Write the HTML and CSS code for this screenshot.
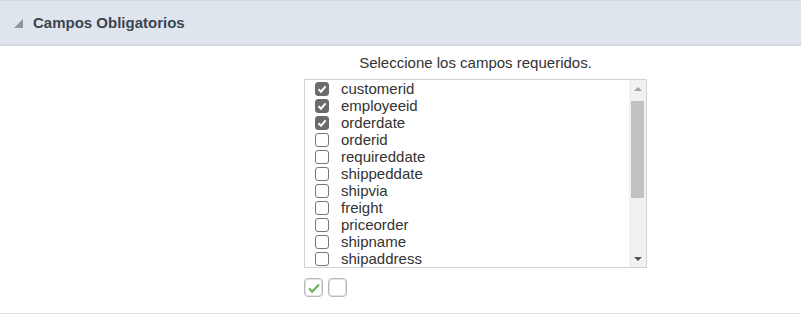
FILE: index.html
```html
<!DOCTYPE html>
<html>
<head>
<meta charset="utf-8">
<link rel="stylesheet" href="styles.css">
</head>
<body>
<div class="panel">
  <div class="panel-head">
    <svg class="toggle" width="9" height="9" viewBox="0 0 9 9"><polygon points="9,0 9,9 0,9" fill="#8c96a1"/></svg>
    <span class="title">Campos Obligatorios</span>
  </div>
  <div class="panel-body">
    <div class="field">
      <div class="caption">Seleccione los campos requeridos.</div>
      <div class="listbox">
        <div class="items">
          <div class="item"><span class="cb on"><svg width="12" height="12" viewBox="0 0 12 12"><path d="M2.5 6.3 L5 8.7 L9.6 3.3" fill="none" stroke="#fff" stroke-width="2"/></svg></span>customerid</div>
          <div class="item"><span class="cb on"><svg width="12" height="12" viewBox="0 0 12 12"><path d="M2.5 6.3 L5 8.7 L9.6 3.3" fill="none" stroke="#fff" stroke-width="2"/></svg></span>employeeid</div>
          <div class="item"><span class="cb on"><svg width="12" height="12" viewBox="0 0 12 12"><path d="M2.5 6.3 L5 8.7 L9.6 3.3" fill="none" stroke="#fff" stroke-width="2"/></svg></span>orderdate</div>
          <div class="item"><span class="cb"></span>orderid</div>
          <div class="item"><span class="cb"></span>requireddate</div>
          <div class="item"><span class="cb"></span>shippeddate</div>
          <div class="item"><span class="cb"></span>shipvia</div>
          <div class="item"><span class="cb"></span>freight</div>
          <div class="item"><span class="cb"></span>priceorder</div>
          <div class="item"><span class="cb"></span>shipname</div>
          <div class="item"><span class="cb"></span>shipaddress</div>
        </div>
        <div class="scrollbar">
          <div class="arrow up"></div>
          <div class="track"><div class="thumb"></div></div>
          <div class="arrow down"></div>
        </div>
      </div>
      <div class="actions">
        <span class="btn"><svg width="14" height="12" viewBox="0 0 14 12"><path d="M2 6.5 L5.2 9.6 L12 2.4" fill="none" stroke="#6cb35a" stroke-width="2.2"/></svg></span>
        <span class="btn"></span>
      </div>
    </div>
  </div>
</div>
</body>
</html>
```

FILE: styles.css
```css
html, body {
  margin: 0;
  padding: 0;
  background: #fff;
}
body {
  font-family: "Liberation Sans", Arial, sans-serif;
  color: #333;
  font-size: 15px;
}
.panel {
  width: 801px;
}
.panel-head {
  height: 43px;
  background: #dfe5ec;
  border-top: 1px solid #d0d9e1;
  border-bottom: 2px solid #d2dbe3;
  display: flex;
  align-items: center;
}
.toggle {
  margin-left: 14px;
  margin-top: 2px;
}
.title {
  margin-left: 10px;
  font-weight: bold;
  font-size: 15px;
  color: #3b4450;
}
.panel-body {
  border-bottom: 1px solid #dde4eb;
  height: 267px;
}
.field {
  margin-left: 304px;
  width: 343px;
  display: flex;
  flex-direction: column;
}
.caption {
  text-align: center;
  margin-top: 8px;
  height: 25px;
  line-height: 18px;
  color: #333;
}
.listbox {
  height: 187px;
  border: 1px solid #c9d4dd;
  display: flex;
  overflow: hidden;
}
.items {
  flex: 1;
  padding-left: 10px;
  overflow: hidden;
}
.item {
  height: 17px;
  line-height: 17px;
  display: flex;
  align-items: center;
  color: #333;
}
.cb {
  width: 14px;
  height: 14px;
  box-sizing: border-box;
  border: 1px solid #767676;
  border-radius: 3px;
  background: #fff;
  margin-right: 12px;
  display: flex;
  align-items: center;
  justify-content: center;
}
.cb.on {
  background: #6b6b6b;
  border-color: #6b6b6b;
}
.scrollbar {
  width: 17px;
  background: #f1f1f1;
  display: flex;
  flex-direction: column;
}
.arrow {
  height: 17px;
  display: flex;
  align-items: center;
  justify-content: center;
}
.arrow.up::before {
  content: "";
  border-left: 4px solid transparent;
  border-right: 4px solid transparent;
  border-bottom: 4px solid #a3a3a3;
}
.arrow.down::before {
  content: "";
  border-left: 4px solid transparent;
  border-right: 4px solid transparent;
  border-top: 4px solid #505050;
}
.track {
  flex: 1;
  padding: 4px 2px 0;
}
.thumb {
  height: 97px;
  background: #c1c1c1;
}
.actions {
  display: flex;
  gap: 5px;
  margin-top: 10px;
  margin-left: 0;
}
.btn {
  width: 19px;
  height: 19px;
  box-sizing: border-box;
  border: 1px solid #b9b9b9;
  border-radius: 4px;
  box-shadow: inset 0 0 0 1px #e3e3e3;
  display: flex;
  align-items: center;
  justify-content: center;
}
```
